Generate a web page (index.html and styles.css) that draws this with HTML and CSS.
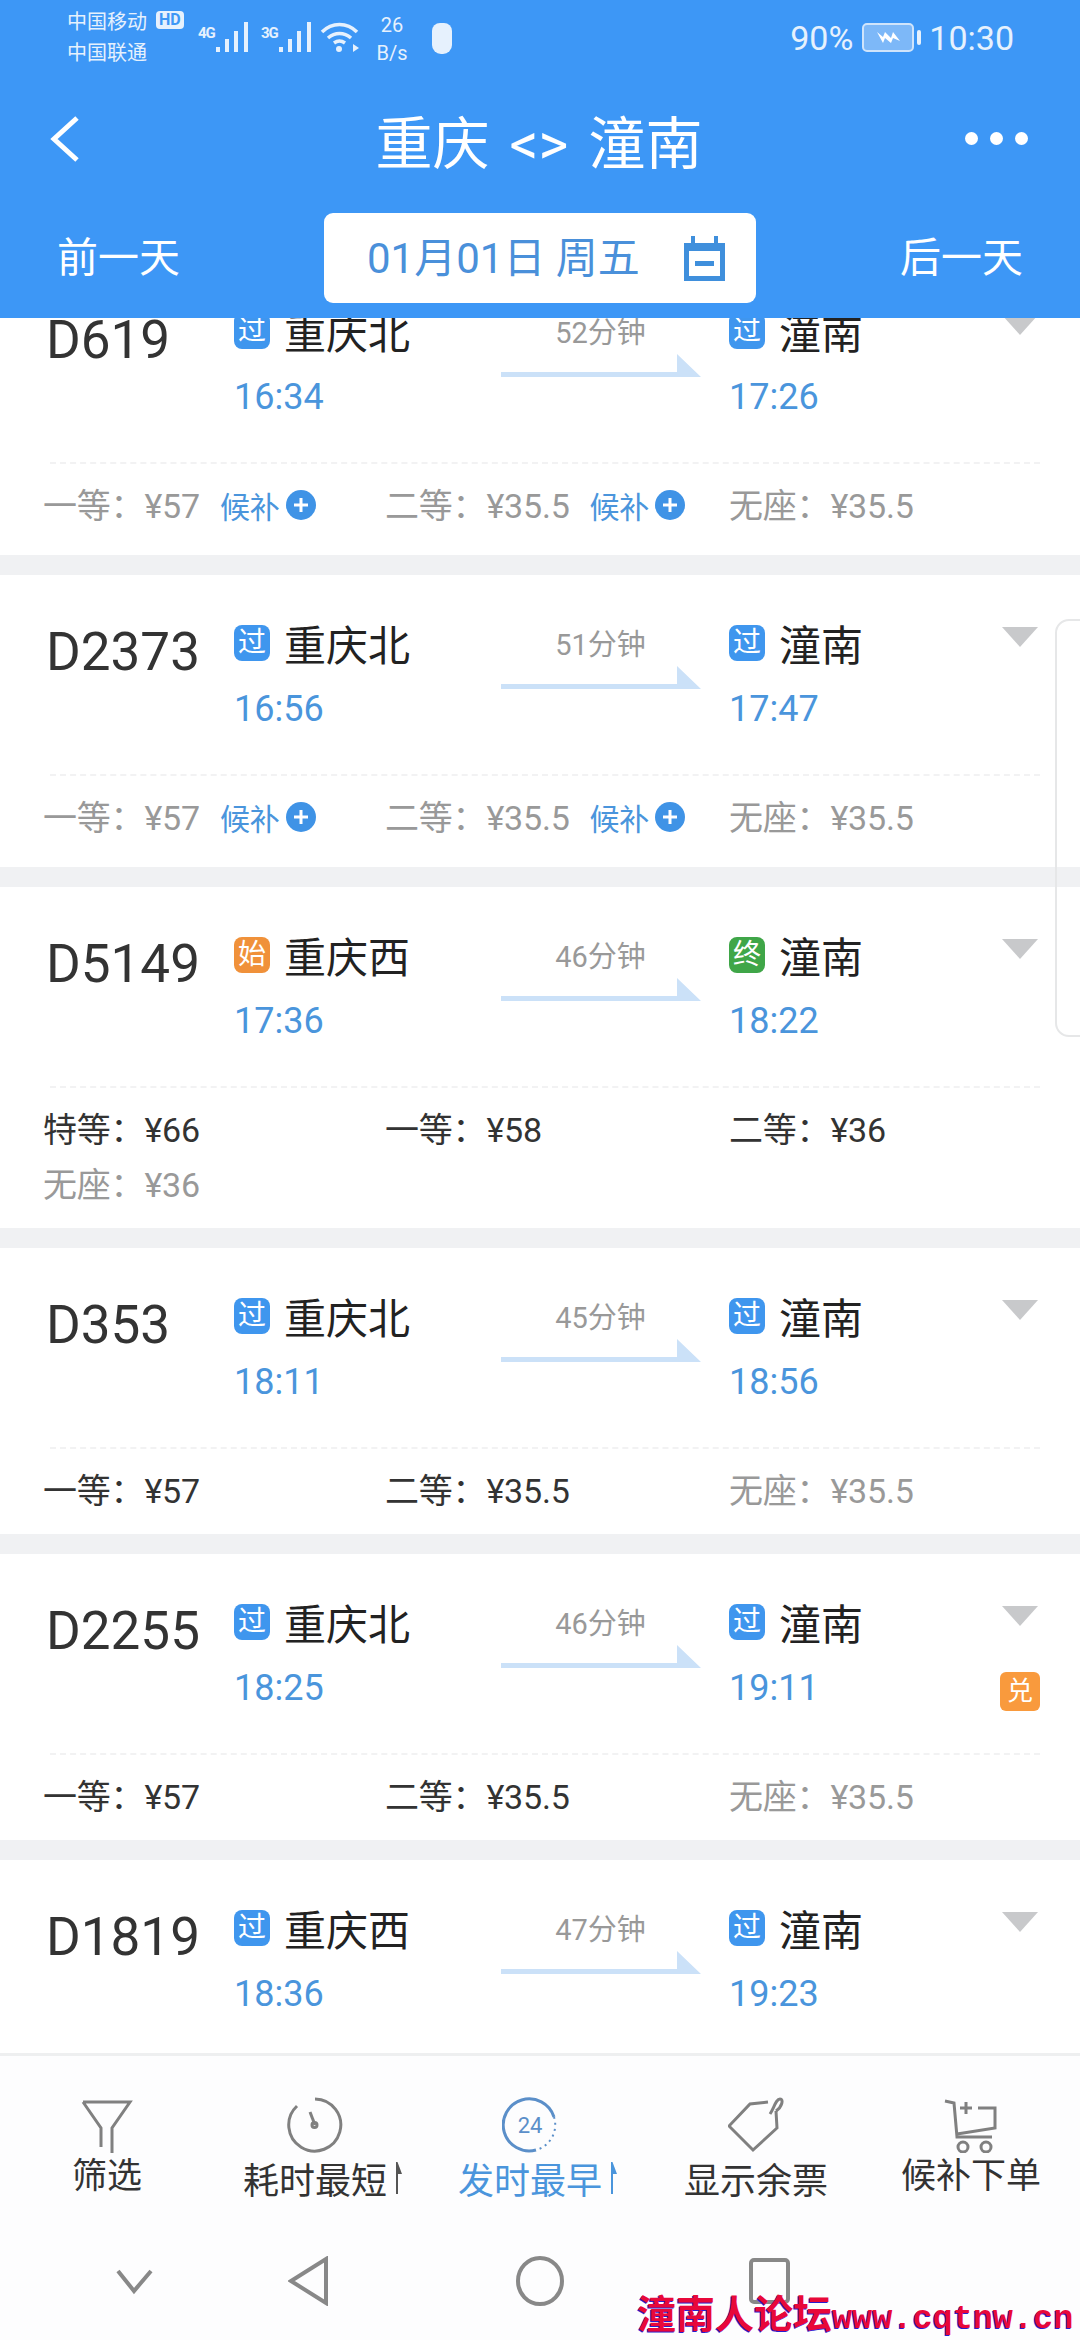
FILE: index.html
```html
<!DOCTYPE html>
<html>
<head>
    <meta charset="utf-8" />
    <title>重庆 &lt;&gt; 潼南</title>
    <link rel="stylesheet" href="styles.css">
</head>
<body>
<svg class="defs" width="0" height="0">
    <symbol id="route-arrow" viewBox="0 0 200 24"><polygon points="0,18 176,18 176,0 200,23 0,23" /></symbol>
    <symbol id="plus-dot" viewBox="0 0 30 30"><circle cx="15" cy="15" r="15" fill="#3f93e6" /><path d="M15 8v14M8 15h14" stroke="#fff" stroke-width="3" /></symbol>
    <symbol id="signal" viewBox="0 0 33 30"><path d="M0 25h4v5H0zM9 17h4v13H9zM18 9h4v21h-4zM28 0h4v30h-4z" /></symbol>
    <symbol id="sort-mark" viewBox="0 0 8 32"><path d="M1 32V0h1.500L7 12H3v20z" /></symbol>
</svg>

<header class="top">
    <div class="status">
        <div class="carriers">
            <div class="carrier">中国移动<span class="hd">HD</span></div>
            <div class="carrier">中国联通</div>
        </div>
        <span class="net net-4g">4G</span>
        <svg class="bars"><use href="#signal" /></svg>
        <span class="net net-3g">3G</span>
        <svg class="bars"><use href="#signal" /></svg>
        <svg class="wifi" viewBox="0 0 39 30">
            <path d="M2 10C12 0 27 0 37 10M8 16c7-6 16-6 23 0M14 21c3.500-2.500 7.500-2.500 11 0" fill="none" stroke="#e6f1fd" stroke-width="3.500" />
            <circle cx="19" cy="27" r="3" fill="#e6f1fd" />
            <polygon points="33,22 39,26 33,30" fill="#e6f1fd" />
        </svg>
        <div class="speed"><span>26</span><span>B/s</span></div>
        <div class="capsule"></div>
        <div class="status-right">
            <span>90%</span>
            <svg class="battery" viewBox="0 0 59 29">
                <rect x="1" y="1" width="50" height="27" rx="4" fill="#7db8f8" stroke="#cfe4fb" stroke-width="2" />
                <rect x="55" y="7" width="4" height="15" rx="2" fill="#e6f1fd" />
                <path d="M15 9l6 5 2-5 6 6 2-6 7 9-7-3-2 5-6-5-2 5z" fill="#fff" />
            </svg>
            <span>10:30</span>
        </div>
    </div>

    <div class="titlebar">
        <svg class="back" viewBox="0 0 30 46"><path d="M27 2L4 23l23 21" fill="none" stroke="#fff" stroke-width="5" /></svg>
        <h1 class="title">重庆 &lt;&gt; 潼南</h1>
        <div class="more"><i></i><i></i><i></i></div>
    </div>

    <div class="daybar">
        <a class="day">前一天</a>
        <div class="datebox">
            <span class="datetext">01月01日 周五</span>
            <svg class="cal" viewBox="0 0 45 45">
                <path d="M2 7h41v38H2z" fill="#3f8fdc" />
                <path d="M7 15h31v25H7z" fill="#fff" />
                <path d="M13 25h19v5H13z" fill="#3f8fdc" />
                <path d="M9 0h4v11H9zM32 0h4v11h-4z" fill="#3f8fdc" />
            </svg>
        </div>
        <a class="day">后一天</a>
    </div>
</header>

<main class="list">
    <section class="card card-first">
        <div class="route">
            <div class="train">D619</div>
            <div class="stop"><div class="station"><b class="tag">过</b>重庆北</div><div class="time">16:34</div></div>
            <div class="span"><div class="mins">52分钟</div><svg class="arrow"><use href="#route-arrow" /></svg></div>
            <div class="stop"><div class="station"><b class="tag">过</b>潼南</div><div class="time">17:26</div></div>
            <div class="side"><i class="caret"></i></div>
        </div>
        <div class="rule"></div>
        <div class="prices prices-wait">
            <div class="price off">一等：¥57<span class="wait">候补<svg class="plus"><use href="#plus-dot" /></svg></span></div>
            <div class="price off">二等：¥35.5<span class="wait">候补<svg class="plus"><use href="#plus-dot" /></svg></span></div>
            <div class="price off">无座：¥35.5</div>
        </div>
    </section>

    <section class="card">
        <div class="route">
            <div class="train">D2373</div>
            <div class="stop"><div class="station"><b class="tag">过</b>重庆北</div><div class="time">16:56</div></div>
            <div class="span"><div class="mins">51分钟</div><svg class="arrow"><use href="#route-arrow" /></svg></div>
            <div class="stop"><div class="station"><b class="tag">过</b>潼南</div><div class="time">17:47</div></div>
            <div class="side"><i class="caret"></i></div>
        </div>
        <div class="rule"></div>
        <div class="prices prices-wait">
            <div class="price off">一等：¥57<span class="wait">候补<svg class="plus"><use href="#plus-dot" /></svg></span></div>
            <div class="price off">二等：¥35.5<span class="wait">候补<svg class="plus"><use href="#plus-dot" /></svg></span></div>
            <div class="price off">无座：¥35.5</div>
        </div>
    </section>

    <section class="card">
        <div class="route">
            <div class="train">D5149</div>
            <div class="stop"><div class="station"><b class="tag tag-start">始</b>重庆西</div><div class="time">17:36</div></div>
            <div class="span"><div class="mins">46分钟</div><svg class="arrow"><use href="#route-arrow" /></svg></div>
            <div class="stop"><div class="station"><b class="tag tag-end">终</b>潼南</div><div class="time">18:22</div></div>
            <div class="side"><i class="caret"></i></div>
        </div>
        <div class="rule"></div>
        <div class="prices">
            <div class="price">特等：¥66</div>
            <div class="price">一等：¥58</div>
            <div class="price">二等：¥36</div>
            <div class="price off">无座：¥36</div>
        </div>
    </section>

    <section class="card">
        <div class="route">
            <div class="train">D353</div>
            <div class="stop"><div class="station"><b class="tag">过</b>重庆北</div><div class="time">18:11</div></div>
            <div class="span"><div class="mins">45分钟</div><svg class="arrow"><use href="#route-arrow" /></svg></div>
            <div class="stop"><div class="station"><b class="tag">过</b>潼南</div><div class="time">18:56</div></div>
            <div class="side"><i class="caret"></i></div>
        </div>
        <div class="rule"></div>
        <div class="prices">
            <div class="price">一等：¥57</div>
            <div class="price">二等：¥35.5</div>
            <div class="price off">无座：¥35.5</div>
        </div>
    </section>

    <section class="card">
        <div class="route">
            <div class="train">D2255</div>
            <div class="stop"><div class="station"><b class="tag">过</b>重庆北</div><div class="time">18:25</div></div>
            <div class="span"><div class="mins">46分钟</div><svg class="arrow"><use href="#route-arrow" /></svg></div>
            <div class="stop"><div class="station"><b class="tag">过</b>潼南</div><div class="time">19:11</div></div>
            <div class="side"><i class="caret"></i><b class="swap">兑</b></div>
        </div>
        <div class="rule"></div>
        <div class="prices">
            <div class="price">一等：¥57</div>
            <div class="price">二等：¥35.5</div>
            <div class="price off">无座：¥35.5</div>
        </div>
    </section>

    <section class="card card-last">
        <div class="route">
            <div class="train">D1819</div>
            <div class="stop"><div class="station"><b class="tag">过</b>重庆西</div><div class="time">18:36</div></div>
            <div class="span"><div class="mins">47分钟</div><svg class="arrow"><use href="#route-arrow" /></svg></div>
            <div class="stop"><div class="station"><b class="tag">过</b>潼南</div><div class="time">19:23</div></div>
            <div class="side"><i class="caret"></i></div>
        </div>
    </section>
</main>

<footer class="bottom">
    <div class="tools">
        <div class="tool">
            <svg class="tool-icon" viewBox="0 0 56 56"><path d="M4 5h47L33 31v25M22 50V31L4 5" /></svg>
            <div class="label">筛选</div>
        </div>
        <div class="tool tool-sort">
            <svg class="tool-icon" viewBox="0 0 56 56"><path d="M28 2a26 26 0 1 1-18 7" /><path d="M23 15l5 13" /><circle cx="27.500" cy="28" r="2.500" /></svg>
            <div class="label">耗时最短<svg class="mark"><use href="#sort-mark" /></svg></div>
        </div>
        <div class="tool tool-sort tool-on">
            <svg class="tool-icon" viewBox="0 0 56 56">
                <path d="M34 53A26 26 0 1 1 52 20" />
                <path class="dots" d="M52 20a26 26 0 0 1-18 33" />
                <text x="28" y="36" text-anchor="middle">24</text>
            </svg>
            <div class="label">发时最早<svg class="mark"><use href="#sort-mark" /></svg></div>
        </div>
        <div class="tool tool-sort">
            <svg class="tool-icon" viewBox="0 0 56 56"><path d="M40 5L22 7 1 29l24 24 24-22-1-17" /><path d="M42 17c4-6 6-15 10-15s2 8-4 12" /></svg>
            <div class="label">显示余票</div>
        </div>
        <div class="tool">
            <svg class="tool-icon" viewBox="0 0 56 56"><path d="M2 4l9 2 3 34h35M14 37l38-6V11H35M23 5v12M17 11h12" /><circle cx="20" cy="50" r="5" /><circle cx="43" cy="50" r="5" /></svg>
            <div class="label">候补下单</div>
        </div>
    </div>
    <nav class="nav">
        <svg class="nav-down" viewBox="0 0 37 50"><path d="M2 15l16 20 17-20" /></svg>
        <svg class="nav-back" viewBox="0 0 41 50"><path d="M38 3v44L3 25z" /></svg>
        <svg class="nav-home" viewBox="0 0 48 50"><ellipse cx="24" cy="25" rx="22" ry="23" /></svg>
        <svg class="nav-recent" viewBox="0 0 41 50"><rect x="2" y="4" width="37" height="42" rx="3" /></svg>
    </nav>
</footer>

<div class="sheet-edge"></div>
<div class="watermark">潼南人论坛<span>www.cqtnw.cn</span></div>
</body>
</html>
```

FILE: styles.css
```css
*{margin: 0;padding: 0;box-sizing: border-box;}
body{
    position: relative;
    width: 1080px;
    height: 2340px;
    overflow: hidden;
    display: flex;
    flex-direction: column;
    background-color: #f0f1f3;
    font-family: Roboto, "Noto Sans CJK SC", sans-serif;
    color: #333;
}
.defs{position: absolute;}

/* blue header */
.top{
    height: 318px;
    background-color: #3d97f6;
    color: #fff;
}
.status{
    height: 70px;
    display: flex;
    align-items: center;
    padding: 0 66px 0 67px;
    color: #e6f1fd;
}
.carriers{width: 131px;padding-top: 1px;}
.carrier{
    display: flex;
    align-items: center;
    height: 31px;
    font-size: 20px;
}
.hd{
    margin-left: 9px;
    padding: 0 3px;
    height: 18px;
    line-height: 18px;
    border-radius: 4px;
    background-color: #e6f1fd;
    color: #3d97f6;
    font-size: 16px;
    font-weight: 700;
}
.net{
    width: 18px;
    margin-top: -4px;
    font-size: 15px;
    letter-spacing: -1px;
    font-weight: 700;
}
.net-3g{margin-left: 12px;}
.bars{
    width: 33px;
    height: 30px;
    margin-top: 4px;
    fill: #e6f1fd;
}
.wifi{
    width: 39px;
    height: 30px;
    margin: 4px 0 0 8px;
}
.speed{
    width: 34px;
    margin: 8px 0 0 16px;
    display: flex;
    flex-direction: column;
    align-items: center;
    font-size: 20px;
    line-height: 28px;
}
.capsule{
    width: 20px;
    height: 31px;
    margin: 6px 0 0 23px;
    border-radius: 8px 8px 9px 9px;
    background-color: #e6f1fd;
}
.status-right{
    display: flex;
    align-items: center;
    margin-left: auto;
    padding-top: 5px;
    font-size: 34px;
}
.battery{
    width: 59px;
    height: 29px;
    margin: 0 8px 0 9px;
}

.titlebar{
    height: 143px;
    display: grid;
    grid-template-columns: 150px 1fr 150px;
    align-items: center;
    padding: 0 52px 6px 50px;
}
.back{width: 30px;height: 46px;}
.title{
    text-align: center;
    font-size: 57px;
    font-weight: 400;
    word-spacing: 6px;
    white-space: nowrap;
}
.more{
    display: flex;
    justify-content: flex-end;
    gap: 12px;
}
.more i{
    width: 13px;
    height: 13px;
    border-radius: 50%;
    background-color: #fff;
}

.daybar{
    height: 90px;
    display: flex;
    align-items: center;
    justify-content: space-between;
    padding: 0 57px;
}
.day{font-size: 41px;padding-bottom: 8px;}
.datebox{
    width: 432px;
    height: 90px;
    display: flex;
    align-items: center;
    justify-content: space-between;
    padding: 0 29px 0 43px;
    border-radius: 9px;
    background-color: #fff;
    color: #4a90da;
    font-size: 42px;
}
.datetext{padding-bottom: 8px;}
.cal{width: 45px;height: 45px;}

/* train list */
.list{
    height: 1735px;
    overflow: hidden;
    display: flex;
    flex-direction: column;
    gap: 20px;
}
.card{
    flex-shrink: 0;
    background-color: #fff;
    padding: 44px 0 24px;
}
.card-first{margin-top: -55px;}
.card-last{flex-grow: 1;}
.route{
    height: 110px;
    display: grid;
    grid-template-columns: 188px 266px 229px 271px 40px;
    padding-left: 46px;
}
.train{
    font-size: 53px;
    line-height: 66px;
    color: #333;
}
.station{
    display: flex;
    align-items: center;
    gap: 14px;
    height: 47px;
    font-size: 42px;
    color: #222;
}
.tag{
    width: 36px;
    height: 36px;
    line-height: 36px;
    text-align: center;
    border-radius: 8px;
    background-color: #3f96ee;
    color: #fff;
    font-size: 28px;
    font-weight: 400;
}
.tag-start{background-color: #f0913a;}
.tag-end{background-color: #3fa648;}
.time{
    margin-top: 21px;
    font-size: 36px;
    line-height: 44px;
    color: #4a95dc;
}
.span{
    display: flex;
    flex-direction: column;
    align-items: center;
    width: 201px;
}
.mins{
    height: 47px;
    line-height: 52px;
    font-size: 29px;
    color: #999;
}
.arrow{
    width: 200px;
    height: 24px;
    fill: #cbe1f8;
}
.side{
    display: flex;
    flex-direction: column;
    align-items: center;
}
.caret{
    margin-top: 8px;
    width: 0;
    height: 0;
    border-left: 18px solid transparent;
    border-right: 18px solid transparent;
    border-top: 20px solid #c8c9cb;
}
.swap{
    margin-top: 46px;
    width: 40px;
    height: 39px;
    line-height: 39px;
    text-align: center;
    border-radius: 6px;
    background-color: #f99a3d;
    color: #fff;
    font-size: 26px;
    font-weight: 400;
}
.rule{
    margin: 45px 40px 0 50px;
    border-top: 2px dashed #f2f2f3;
}
.prices{
    display: grid;
    grid-template-columns: 342px 344px 1fr;
    row-gap: 11px;
    margin-top: 17px;
    padding-left: 43px;
}
.prices-wait{padding-bottom: 6px;}
.price{
    display: flex;
    align-items: center;
    height: 44px;
    font-size: 34px;
    letter-spacing: -0.2px;
    color: #333;
    white-space: nowrap;
}
.off{color: #999;}
.wait{
    display: flex;
    align-items: center;
    margin: 4px 0 0 20px;
    font-size: 30px;
    color: #4a95dc;
}
.plus{
    width: 30px;
    height: 30px;
    margin-left: 6px;
}

/* bottom tools and system nav */
.bottom{
    height: 287px;
    border-top: 3px solid #eeeff0;
    background-color: #fdfdfe;
    position: relative;
}
.tools{
    display: grid;
    grid-template-columns: 214px 202px 228px 224px 206px;
    height: 153px;
    padding-top: 41px;
}
.tool{
    display: flex;
    flex-direction: column;
    align-items: center;
}
.tool-icon{
    width: 56px;
    height: 56px;
    flex-shrink: 0;
    fill: none;
    stroke: #808080;
    stroke-width: 3;
}
.label{
    display: flex;
    align-items: center;
    height: 44px;
    margin-top: -3px;
    font-size: 35px;
    color: #333;
    white-space: nowrap;
}
.tool-sort .label{margin-top: 3px;font-size: 36px;}
.mark{
    width: 8px;
    height: 32px;
    margin: 0 -16px 0 8px;
    fill: #555;
}
.tool-on .tool-icon{stroke: #5b8fc9;}
.tool-on .dots{stroke-dasharray: 2 4;stroke-width: 2;}
.tool-on text{
    fill: #5b8fc9;
    stroke: none;
    font-size: 22px;
}
.tool-on .label{color: #4a95dc;}
.tool-on .mark{fill: #4a95dc;}
.nav{
    display: flex;
    align-items: center;
    margin-top: 47px;
    padding-left: 116px;
}
.nav svg{
    height: 50px;
    fill: none;
    stroke: #888;
    stroke-width: 4;
}
.nav-down{width: 37px;}
.nav-back{width: 41px;margin-left: 135px;}
.nav-home{width: 48px;margin-left: 187px;}
.nav-recent{width: 41px;margin-left: 185px;}

/* overlays */
.sheet-edge{
    position: absolute;
    left: 1055px;
    top: 619px;
    width: 40px;
    height: 418px;
    border: 2px solid #e6e7e8;
    border-radius: 14px;
}
.watermark{
    position: absolute;
    left: 637px;
    top: 2292px;
    font-size: 39px;
    font-weight: 700;
    line-height: 46px;
    white-space: nowrap;
    color: #e8083a;
    text-shadow: -1px 1px 0 #2a1bd0;
}
.watermark span{
    font-family: "Liberation Mono", monospace;
    font-size: 33.5px;
}
```
